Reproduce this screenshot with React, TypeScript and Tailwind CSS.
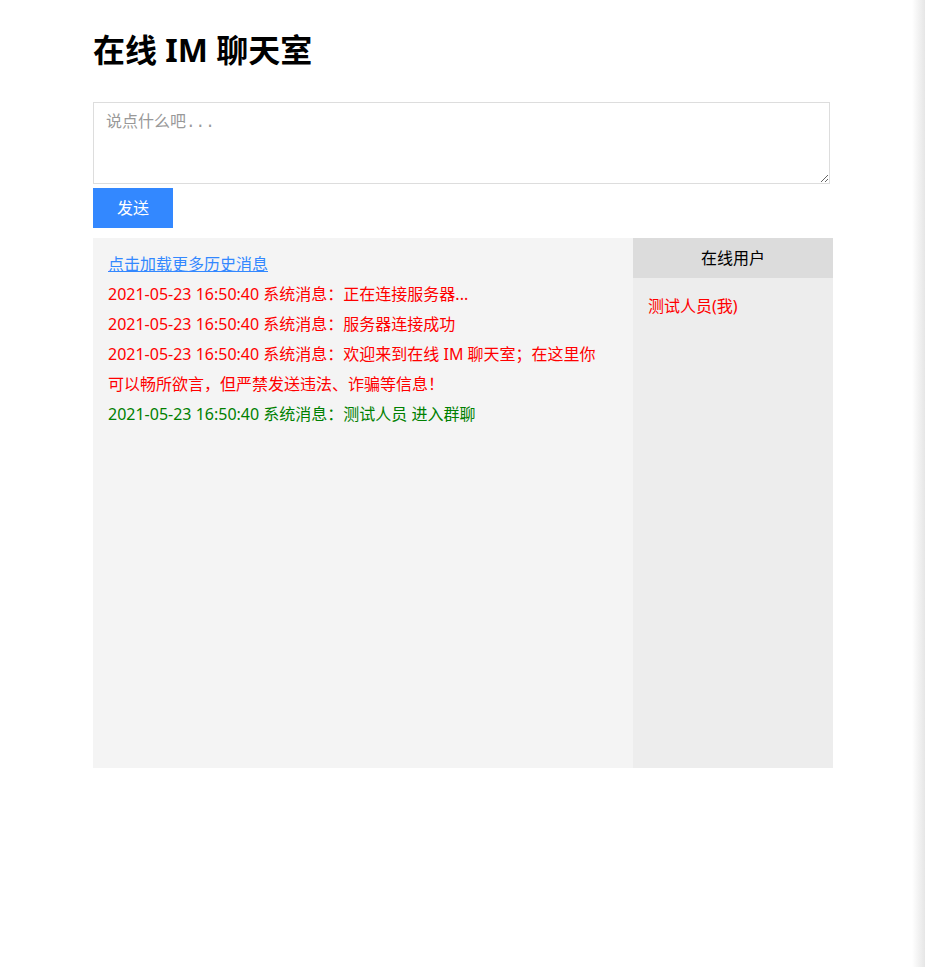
const messages = [
  { time: "2021-05-23 16:50:40", text: "正在连接服务器...", color: "text-[#ff0000]" },
  { time: "2021-05-23 16:50:40", text: "服务器连接成功", color: "text-[#ff0000]" },
  {
    time: "2021-05-23 16:50:40",
    text: "欢迎来到在线 IM 聊天室；在这里你可以畅所欲言，但严禁发送违法、诈骗等信息！",
    color: "text-[#ff0000]",
  },
  { time: "2021-05-23 16:50:40", text: "测试人员 进入群聊", color: "text-[#008000]" },
]

function App() {
  return (
    <div className="flex min-h-[967px] bg-white font-['Noto_Sans','Noto_Sans_CJK_SC',sans-serif] text-black">
      <div className="flex-1 pl-[93px] pt-[28px]">
        <h1 className="text-[32px] font-bold leading-[44px]">在线 IM 聊天室</h1>

        <div className="mt-[30px] flex w-[740px] flex-col items-start gap-[4px]">
          <textarea
            placeholder="说点什么吧..."
            className="block h-[82px] w-[737px] border border-[#dddddd] px-[12px] py-[8px] font-['Liberation_Mono','Noto_Sans_CJK_SC',monospace] text-[16px] leading-[24px] outline-none placeholder:text-[#999999]"
          />
          <button className="h-[40px] w-[80px] bg-[#3388ff] text-[16px] text-white">发送</button>
        </div>

        <div className="mt-[10px] flex h-[530px] w-[740px]">
          <div className="w-[540px] bg-[#f4f4f4] pl-[15px] pr-[26px] pt-[11px] text-[16px] leading-[30px]">
            <a href="#" className="text-[#3388ff] underline">
              点击加载更多历史消息
            </a>
            {messages.map((m, i) => (
              <div key={i} className={m.color}>
                {m.time} 系统消息：{m.text}
              </div>
            ))}
          </div>
          <div className="w-[200px] bg-[#ededed]">
            <div className="h-[40px] bg-[#dcdcdc] text-center text-[16px] leading-[40px]">在线用户</div>
            <div className="px-[15px] pt-[13px] text-[16px] leading-[30px] text-[#ff0000]">测试人员(我)</div>
          </div>
        </div>
      </div>
      <div className="w-[13px] bg-gradient-to-r from-white to-[#e6e6e6]" />
    </div>
  )
}

export default App
